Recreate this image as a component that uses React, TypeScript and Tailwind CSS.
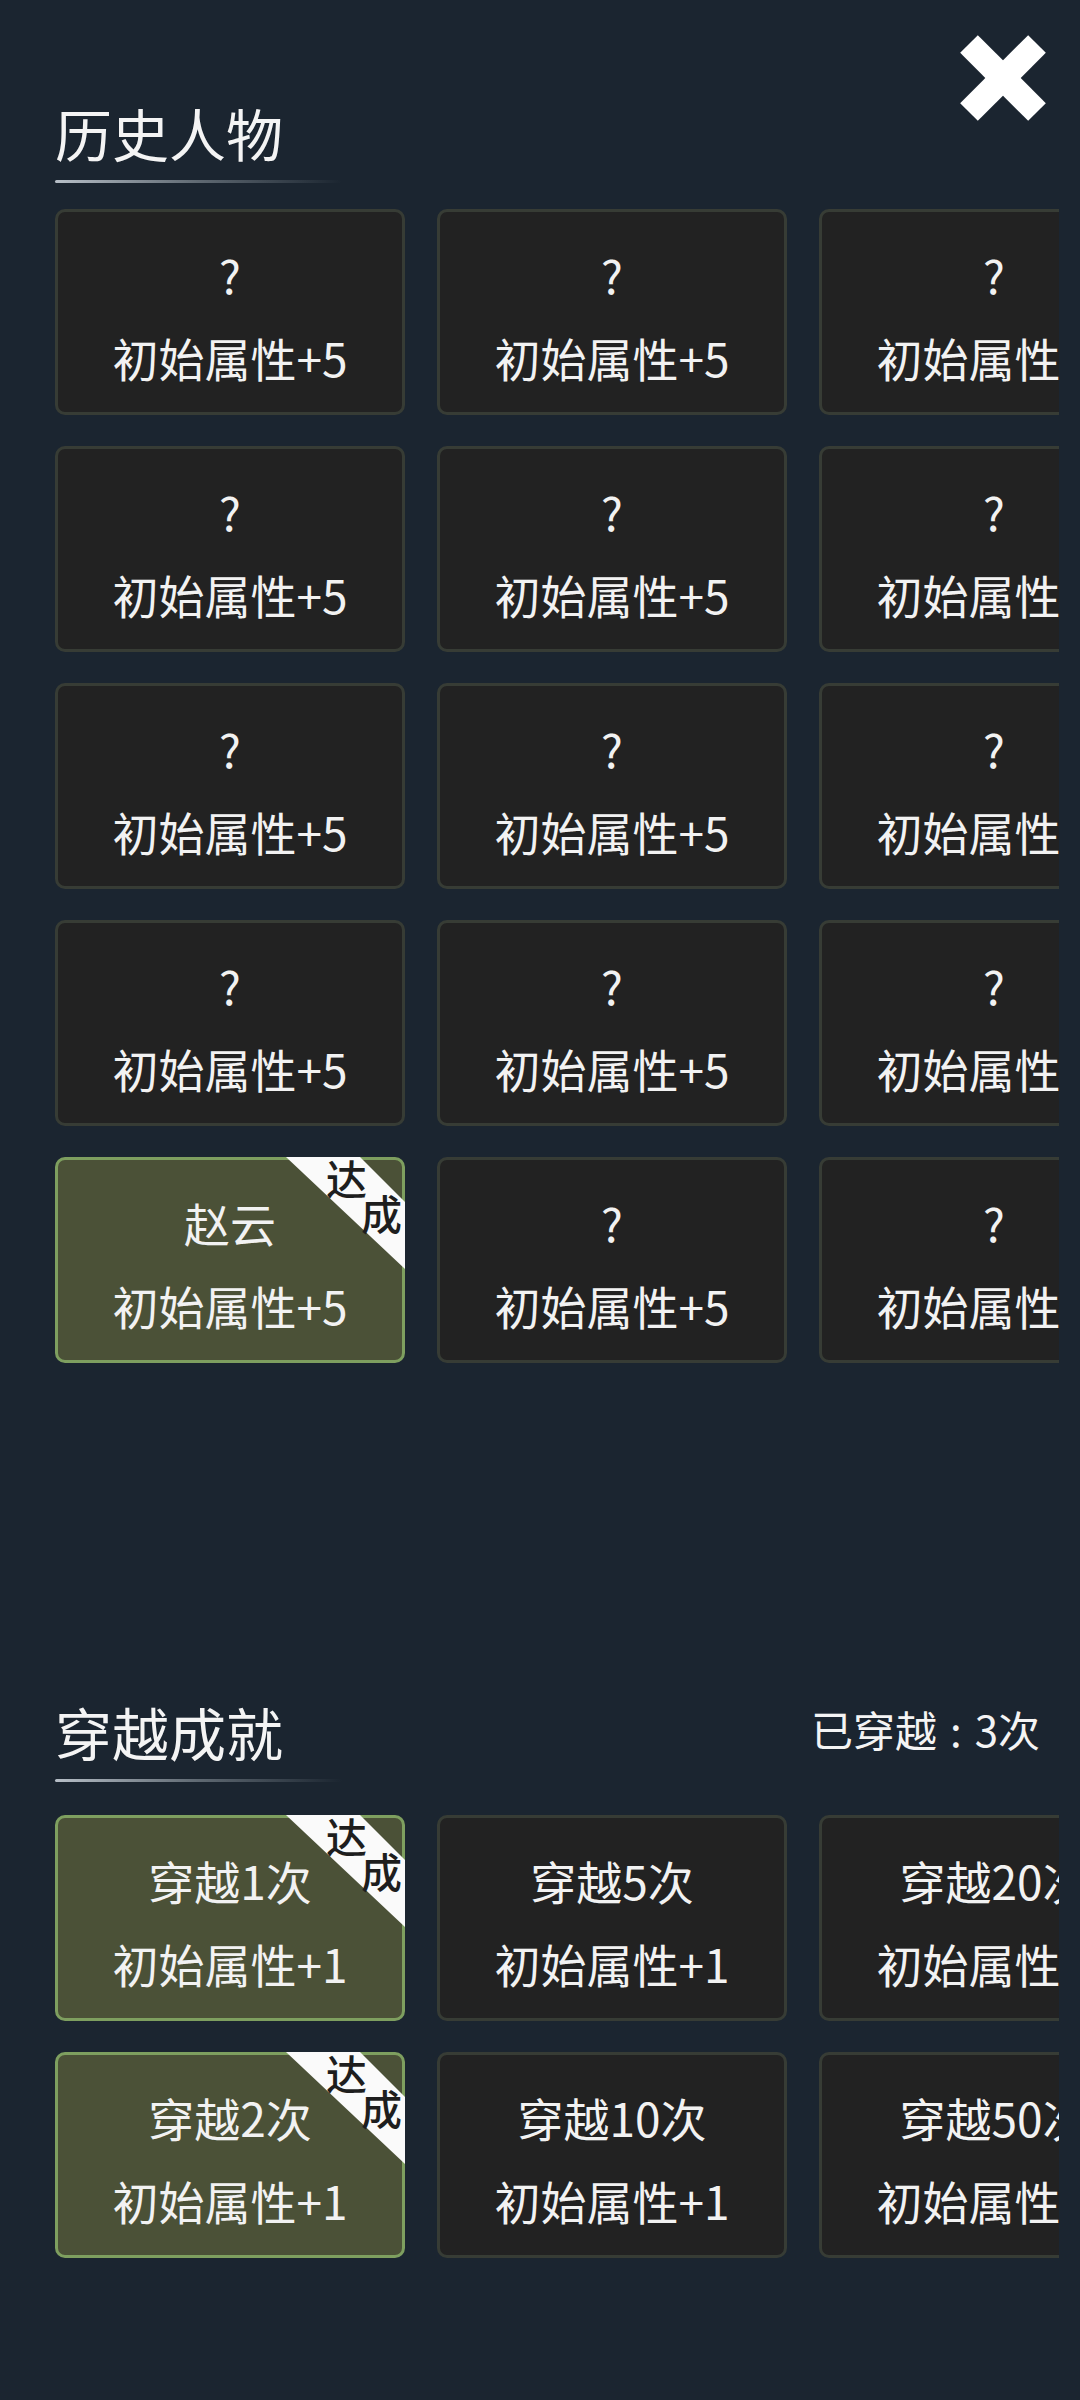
import React from "react";

const FONT = { fontFamily: '"Noto Sans CJK SC", "Noto Sans", sans-serif' };

type Card = { name: string; attr: string; done?: boolean };

function Badge() {
  return (
    <div className="absolute -top-[3px] -right-[3px] w-[119px] h-[112px]">
      <div className="absolute inset-0 bg-[#fafafa] [clip-path:polygon(0_0,74px_0,100%_45px,100%_100%)]" />
      <span className="absolute left-[40px] top-[-2px] text-[41px] leading-[44px] font-medium text-[#1e1e1e]">达</span>
      <span className="absolute left-[75px] top-[33px] text-[41px] leading-[44px] font-medium text-[#1e1e1e]">成</span>
    </div>
  );
}

function CardBox({ c }: { c: Card }) {
  return (
    <div
      className={
        c.done
          ? "relative h-[206px] rounded-[10px] border-[3px] border-[#7e9f5f] bg-[#4b5137] flex flex-col items-center pt-[40px] gap-[38px] text-[#f2f2f2]"
          : "relative h-[206px] rounded-[10px] border-[3px] border-[#373c35] bg-[#222222] flex flex-col items-center pt-[40px] gap-[38px] text-[#f2f2f2]"
      }
    >
      <div className="text-[46px] leading-[45px] whitespace-nowrap">{c.name}</div>
      <div className="text-[46px] leading-[45px] whitespace-nowrap">{c.attr}</div>
      {c.done && <Badge />}
    </div>
  );
}

function Header({ title, right }: { title: string; right?: boolean }) {
  return (
    <div>
      <div className="flex items-center justify-between w-[985px]">
        <div className="text-[57px] leading-[54px] text-[#f4f4f4]">{title}</div>
        {right && (
          <div className="text-[42px] leading-[40px] text-[#f4f4f4] mt-[-4px] flex">
            <span>已穿越</span>
            <span className="mx-[13px]">:</span>
            <span>3次</span>
          </div>
        )}
      </div>
      <div className="mt-[21px] w-[287px] h-[3px] rounded-full bg-linear-to-r from-[#b7bfc7] via-[#5f6972] to-transparent" />
    </div>
  );
}

function Grid({ cards }: { cards: Card[] }) {
  return (
    <div className="w-[1004px] overflow-hidden">
      <div className="grid grid-cols-[350px_350px_350px] gap-x-[32px] gap-y-[31px] w-[1114px]">
        {cards.map((c, i) => (
          <CardBox key={i} c={c} />
        ))}
      </div>
    </div>
  );
}

export default function App() {
  const q: Card = { name: "?", attr: "初始属性+5" };
  const history: Card[] = [
    q, q, q,
    q, q, q,
    q, q, q,
    q, q, q,
    { name: "赵云", attr: "初始属性+5", done: true }, q, q,
  ];
  const travel: Card[] = [
    { name: "穿越1次", attr: "初始属性+1", done: true },
    { name: "穿越5次", attr: "初始属性+1" },
    { name: "穿越20次", attr: "初始属性+1" },
    { name: "穿越2次", attr: "初始属性+1", done: true },
    { name: "穿越10次", attr: "初始属性+1" },
    { name: "穿越50次", attr: "初始属性+1" },
  ];
  return (
    <div className="relative w-[1080px] h-[2400px] bg-[#1b2530] overflow-hidden" style={FONT}>
      <svg
        className="absolute left-[960px] top-[35px]"
        width="86"
        height="86"
        viewBox="0 0 86 86"
      >
        <line x1="9" y1="9" x2="77" y2="77" stroke="#ffffff" strokeWidth="25" />
        <line x1="77" y1="9" x2="9" y2="77" stroke="#ffffff" strokeWidth="25" />
      </svg>

      <div className="pl-[55px] pt-[105px]">
        <Header title="历史人物" />
        <div className="mt-[26px]">
          <Grid cards={history} />
        </div>

        <div className="mt-[341px]">
          <Header title="穿越成就" right />
          <div className="mt-[33px]">
            <Grid cards={travel} />
          </div>
        </div>
      </div>
    </div>
  );
}
